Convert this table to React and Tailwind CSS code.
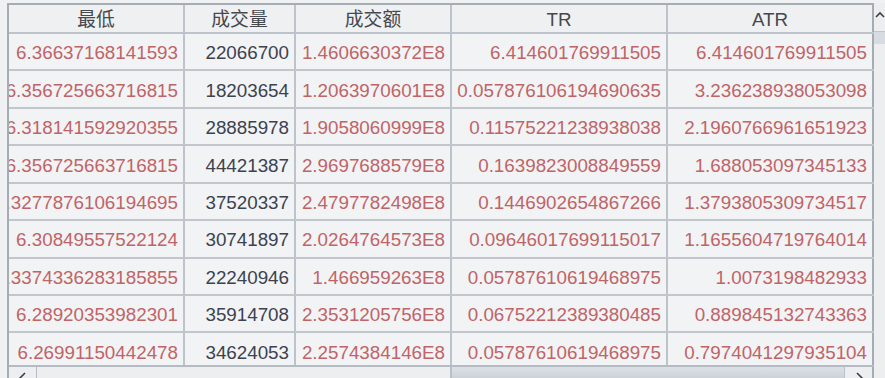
const columns = [
  { title: '最低', w: 'w-[176px]' },
  { title: '成交量', w: 'w-[111px]' },
  { title: '成交额', w: 'w-[156px]' },
  { title: 'TR', w: 'w-[216px]' },
  { title: 'ATR', w: 'w-[206px]' },
]

const rows = [
  ['6.36637168141593', '22066700', '1.4606630372E8', '6.414601769911505', '6.414601769911505'],
  ['6.356725663716815', '18203654', '1.2063970601E8', '0.057876106194690635', '3.236238938053098'],
  ['6.318141592920355', '28885978', '1.9058060999E8', '0.11575221238938038', '2.1960766961651923'],
  ['6.356725663716815', '44421387', '2.9697688579E8', '0.1639823008849559', '1.688053097345133'],
  ['6.3277876106194695', '37520337', '2.4797782498E8', '0.1446902654867266', '1.3793805309734517'],
  ['6.30849557522124', '30741897', '2.0264764573E8', '0.09646017699115017', '1.1655604719764014'],
  ['6.3374336283185855', '22240946', '1.466959263E8', '0.05787610619468975', '1.0073198482933'],
  ['6.28920353982301', '35914708', '2.3531205756E8', '0.06752212389380485', '0.889845132743363'],
  ['6.26991150442478', '34624053', '2.2574384146E8', '0.05787610619468975', '0.7974041297935104'],
]

function Chevron({ dir }) {
  const d = {
    up: 'M1 6 L5 2 L9 6',
    left: 'M7 1 L2 6 L7 11',
    right: 'M3 1 L8 6 L3 11',
  }[dir]
  return (
    <svg width="10" height="12" viewBox="0 0 10 12" className="shrink-0">
      <path d={d} fill="none" stroke="#3b3f45" strokeWidth="1.6" />
    </svg>
  )
}

export default function App() {
  return (
    <div className="w-[885px] h-[378px] bg-[#f0f1f2] overflow-hidden flex pt-[3px] text-[18.8px] leading-none" style={{ fontFamily: '"Liberation Sans", "Noto Sans CJK SC", Arial, sans-serif' }}>
      <div className="w-[7px] shrink-0" />

      {/* table */}
      <div className="w-[867px] shrink-0 flex flex-col border-l-2 border-t-2 border-[#a4acb4]">
        <div className="flex h-[29px] shrink-0 bg-[#eff0f2] border-b-2 border-[#bcc3ca]">
          {columns.map((c, i) => (
            <div
              key={c.title}
              className={`${c.w} shrink-0 flex items-center justify-center pt-[4px] text-[#45484d] border-r-2 ${i === columns.length - 1 ? 'border-[#a4acb4]' : 'border-[#bcc3ca]'}`}
            >
              {c.title}
            </div>
          ))}
        </div>

        <div className="flex-1 overflow-hidden bg-[#f2f3f4]">
          {rows.map((r, ri) => (
            <div key={ri} className="flex h-[37.43px] border-b-2 border-[#c0c6cc]">
              {r.map((v, ci) => (
                <div
                  key={ci}
                  className={`${columns[ci].w} shrink-0 flex items-center justify-end overflow-hidden pr-[5px] pt-[4px] border-r-2 ${ci === 4 ? 'border-[#a4acb4]' : 'border-[#bcc3ca]'} ${ci === 1 ? 'text-[#3c4250]' : 'text-[#bf6468]'}`}
                >
                  <span className="shrink-0 whitespace-nowrap">{v}</span>
                </div>
              ))}
            </div>
          ))}
        </div>

        {/* horizontal scrollbar */}
        <div className="h-[13px] shrink-0 flex border-t-2 border-[#b4bbc2] bg-[#eceef0]">
          <div className="w-[28px] shrink-0 flex items-start justify-center pt-[5px] border-r border-[#b4bbc2]">
            <Chevron dir="left" />
          </div>
          <div className="w-[413px] shrink-0" />
          <div className="w-[395px] shrink-0 border-l-2 border-r border-[#b9c0c7] bg-gradient-to-b from-[#dde1e6] to-[#cdd2d8]" />
          <div className="flex-1 flex items-start justify-center pt-[5px] border-r-2 border-[#a4acb4]">
            <Chevron dir="right" />
          </div>
        </div>
      </div>

      {/* vertical scrollbar */}
      <div className="flex-1 flex flex-col bg-[#eceef0]">
        <div className="h-[29px] shrink-0 flex items-start justify-center pt-[8px] border-b border-[#c0c6cc]">
          <Chevron dir="up" />
        </div>
        <div className="h-[12px] shrink-0 bg-[#d7dce2]" />
        <div className="flex-1" />
      </div>
    </div>
  )
}
